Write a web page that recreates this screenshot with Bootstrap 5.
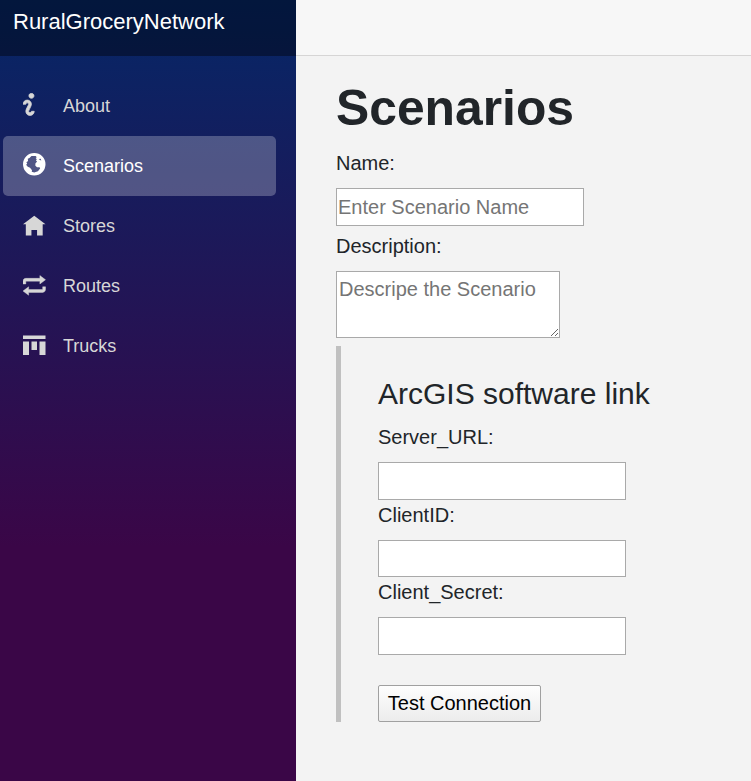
<!DOCTYPE html>
<html lang="en">
<head>
<meta charset="utf-8">
<meta name="viewport" content="width=device-width, initial-scale=1">
<title>RuralGroceryNetwork</title>
<link href="https://cdn.jsdelivr.net/npm/bootstrap@5.3.0/dist/css/bootstrap.min.css" rel="stylesheet">
<style>
  body { font-family: "Liberation Sans", Arial, sans-serif; font-size: 20px; line-height: 30px; color: #212529; background: #f3f3f3; }
  .side { width: 296px; background-image: linear-gradient(180deg, #052767 0%, #3a0647 70%); }
  .side-top { height: 56px; padding: 5px 13px; background: rgba(0,0,0,.4); }
  .side-top .navbar-brand { font-size: 22px; line-height: 33px; color: #fff; }
  .side-menu { padding: 20px 20px 0 3px; }
  .side-menu .nav-link { height: 60px; padding: 0 20px; font-size: 18px; line-height: 60px; color: #d7d7d7; border-radius: 5px; }
  .side-menu .nav-link.active { background: rgba(255,255,255,.25); color: #fff; }
  .side-menu svg { width: 22.5px; height: 22.5px; margin: 17px 17.5px 0 0; fill: currentColor; }
  .topbar { height: 56px; background: #f7f7f7; border-bottom: 1px solid #d6d5d5; }
  .content { padding: 22px 40px 0; }
  .content h1 { font-size: 49.8px; font-weight: 700; line-height: 60px; margin-bottom: 10px; }
  .content label { display: block; height: 30px; margin-bottom: 10px; }
  .field { display: block; width: 248px; height: 37.6px; padding: 2px 1px 0; border: 1px solid #a9a9a9; border-radius: 0; background: #fff; line-height: 30px; }
  .field::placeholder { color: #757575; opacity: 1; }
  .desc-label { margin-top: 5.4px; }
  .area { width: 224px; height: 67px; padding: 2px; resize: both; overflow: auto; }
  .link-box { margin-top: 8px; height: 376px; border-left: 5px solid #c0c0c0; padding: 30px 0 0 37px; }
  .link-box h3 { font-size: 30px; line-height: 36px; font-weight: 400; margin-bottom: 10px; }
  .test-btn { width: 163px; height: 37px; margin-top: 30px; padding: 0; border: 1px solid #a0a0a0; border-radius: 2px; background: linear-gradient(#fefefe, #ececec); color: #000; line-height: 34px; }
</style>
</head>
<body>
<div class="d-flex vh-100 overflow-hidden">
  <aside class="side flex-shrink-0">
    <div class="side-top"><a class="navbar-brand d-block m-0">RuralGroceryNetwork</a></div>
    <nav class="side-menu nav flex-column flex-nowrap">
      <a class="nav-link d-flex" href="#"><svg viewBox="0 0 8 8"><path stroke="currentColor" stroke-width=".25" d="M3 0.100c-.55 0-.9.400-.9.900s.4.900.9.900.9-.4.900-.9-.4-.9-.9-.9zm-1.5 2.400c-.83 0-1.500.67-1.500 1.500h1c0-.28.22-.5.5-.5s.5.22.5.5-1 1.640-1 2.500c0 .86.67 1.500 1.500 1.500s1.500-.67 1.500-1.500h-1c0 .28-.22.5-.5.5s-.5-.22-.5-.5c0-.36 1-1.840 1-2.500 0-.81-.67-1.500-1.500-1.500z"/></svg>About</a>
      <a class="nav-link active d-flex" href="#"><svg viewBox="0 0 8 8"><path fill-rule="evenodd" d="M4 0a4 4 0 1 0 0 8a4 4 0 0 0 0-8zM3 1.100L4.500 1.100L4.900 1.500L4.500 1.800L4.900 2.200L4.600 2.700L5 3L4.400 3.700L4.400 4.500L5 5.050L5.900 5.100L6.100 5.500L5.300 6.500L4 6.900L3.100 6.700L3.200 6.100L2.500 5.200L1.700 4.900L1.100 4.200L1.500 3.800L1.200 3.300L1.800 2.800L1.700 2L2.300 1.800zM5.600 2.100L6.300 2L6.500 2.700L6 2.500z"/></svg>Scenarios</a>
      <a class="nav-link d-flex" href="#"><svg viewBox="0 0 8 8"><path transform="translate(0 1)" d="M4 0l-4 3h1v4h2v-2h2v2h2v-4.030l1 .03-4-3z"/></svg>Stores</a>
      <a class="nav-link d-flex" href="#"><svg viewBox="0 0 8 8"><path transform="translate(0 .9)" stroke="currentColor" stroke-width=".15" d="M6 0v1h-5c-.55 0-1 .45-1 1v1h1v-1h5v1l2-1.500-2-1.500zm-4 4l-2 1.500 2 1.500v-1h5c.55 0 1-.45 1-1v-1h-1v1h-5v-1z"/></svg>Routes</a>
      <a class="nav-link d-flex" href="#"><svg viewBox="0 0 22.5 22.5"><path d="M0 2.500h22.500v3.500H0zM0 8.500h6V22H0zM8.500 8.500h5.500V17H8.500zM16.500 8.500h6V22h-6z"/></svg>Trucks</a>
    </nav>
  </aside>
  <main class="flex-grow-1">
    <div class="topbar"></div>
    <div class="content">
      <h1>Scenarios</h1>
      <label for="name">Name:</label>
      <input class="field" id="name" placeholder="Enter Scenario Name">
      <label class="desc-label" for="desc">Description:</label>
      <textarea class="field area" id="desc" placeholder="Descripe the Scenario"></textarea>
      <section class="link-box">
        <h3>ArcGIS software link</h3>
        <label for="url">Server_URL:</label>
        <input class="field" id="url">
        <label for="cid">ClientID:</label>
        <input class="field" id="cid">
        <label for="sec">Client_Secret:</label>
        <input class="field" id="sec">
        <button class="test-btn" type="button">Test Connection</button>
      </section>
    </div>
  </main>
</div>
<script src="https://cdn.jsdelivr.net/npm/bootstrap@5.3.0/dist/js/bootstrap.bundle.min.js"></script>
</body>
</html>
